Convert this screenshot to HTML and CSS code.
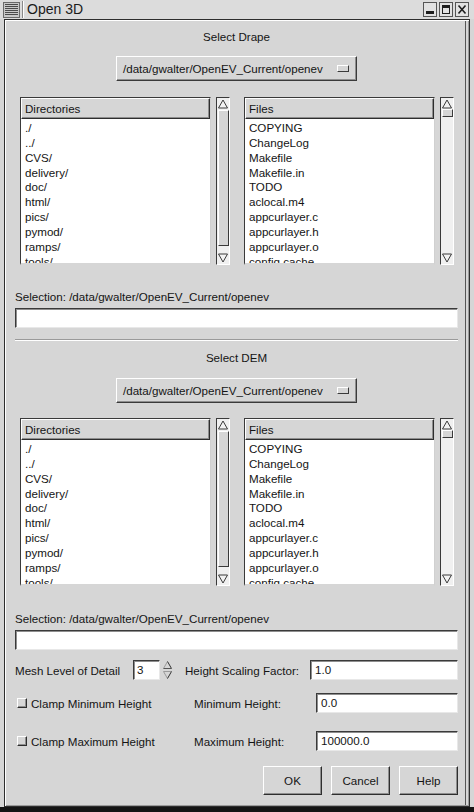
FILE: index.html
```html
<!DOCTYPE html>
<html>
<head>
<meta charset="utf-8">
<title>Open 3D</title>
<link rel="stylesheet" href="styles.css">
</head>
<body>
<div class="titlebar">
  <svg class="menu-icon" width="17" height="16" viewBox="0 0 17 16">
    <rect x="0.5" y="0.5" width="16" height="15" fill="#c8c8c8" stroke="#6a6a6a"/>
    <g stroke="#4a4a4a" stroke-width="1">
      <line x1="2" y1="2.5" x2="15" y2="2.5"/>
      <line x1="2" y1="4.5" x2="15" y2="4.5"/>
      <line x1="2" y1="6.5" x2="15" y2="6.5"/>
      <line x1="2" y1="8.5" x2="15" y2="8.5"/>
      <line x1="2" y1="10.5" x2="15" y2="10.5"/>
      <line x1="2" y1="12.5" x2="15" y2="12.5"/>
    </g>
  </svg>
  <div class="title-sep"></div>
  <span class="title">Open 3D</span>
  <div class="title-buttons">
    <svg width="14" height="15" viewBox="0 0 14 15">
      <rect x="0.5" y="0.5" width="13" height="14" fill="#e2e2e2" stroke="#555"/>
      <rect x="3" y="9" width="8" height="3" fill="#1e1e1e"/>
    </svg>
    <svg width="14" height="15" viewBox="0 0 14 15">
      <rect x="0.5" y="0.5" width="13" height="14" fill="#e2e2e2" stroke="#555"/>
      <rect x="3.5" y="3.5" width="7" height="8" fill="none" stroke="#1e1e1e"/>
      <rect x="3" y="3" width="8" height="3" fill="#1e1e1e"/>
    </svg>
    <svg width="14" height="15" viewBox="0 0 14 15">
      <rect x="0.5" y="0.5" width="13" height="14" fill="#e2e2e2" stroke="#555"/>
      <path d="M3.5 3.5 L10.5 11.5 M10.5 3.5 L3.5 11.5" stroke="#1e1e1e" stroke-width="1.6"/>
    </svg>
  </div>
</div>

<div class="window">
  <div class="content">
    <div class="heading">Select Drape</div>
    <div class="combo-wrap">
      <div class="combo"><span>/data/gwalter/OpenEV_Current/openev</span><span class="combo-ind"></span></div>
    </div>
    <div class="lists">
      <div class="col">
        <div class="list">
          <div class="list-header">Directories</div>
          <div class="items">
            <div>./</div><div>../</div><div>CVS/</div><div>delivery/</div><div>doc/</div>
            <div>html/</div><div>pics/</div><div>pymod/</div><div>ramps/</div><div>tools/</div>
          </div>
        </div>
        <div class="scroll">
          <svg class="arrow" width="12" height="10" viewBox="0 0 12 10"><polygon points="6,1 10.5,9 1.5,9" fill="#f2f2f2" stroke="#3a3a3a"/></svg>
          <div class="thumb thumb-long"></div>
          <svg class="arrow arrow-down" width="12" height="10" viewBox="0 0 12 10"><polygon points="1.5,1 10.5,1 6,9" fill="#f2f2f2" stroke="#3a3a3a"/></svg>
        </div>
      </div>
      <div class="col">
        <div class="list">
          <div class="list-header">Files</div>
          <div class="items">
            <div>COPYING</div><div>ChangeLog</div><div>Makefile</div><div>Makefile.in</div><div>TODO</div>
            <div>aclocal.m4</div><div>appcurlayer.c</div><div>appcurlayer.h</div><div>appcurlayer.o</div><div>config.cache</div>
          </div>
        </div>
        <div class="scroll">
          <svg class="arrow" width="12" height="10" viewBox="0 0 12 10"><polygon points="6,1 10.5,9 1.5,9" fill="#f2f2f2" stroke="#3a3a3a"/></svg>
          <div class="thumb thumb-short"></div>
          <svg class="arrow arrow-down" width="12" height="10" viewBox="0 0 12 10"><polygon points="1.5,1 10.5,1 6,9" fill="#f2f2f2" stroke="#3a3a3a"/></svg>
        </div>
      </div>
    </div>
    <div class="sel-label">Selection: /data/gwalter/OpenEV_Current/openev</div>
    <div class="entry"></div>

    <div class="separator"></div>

    <div class="heading heading-dem">Select DEM</div>
    <div class="combo-wrap combo-wrap-dem">
      <div class="combo"><span>/data/gwalter/OpenEV_Current/openev</span><span class="combo-ind"></span></div>
    </div>
    <div class="lists lists-dem">
      <div class="col">
        <div class="list">
          <div class="list-header">Directories</div>
          <div class="items">
            <div>./</div><div>../</div><div>CVS/</div><div>delivery/</div><div>doc/</div>
            <div>html/</div><div>pics/</div><div>pymod/</div><div>ramps/</div><div>tools/</div>
          </div>
        </div>
        <div class="scroll">
          <svg class="arrow" width="12" height="10" viewBox="0 0 12 10"><polygon points="6,1 10.5,9 1.5,9" fill="#f2f2f2" stroke="#3a3a3a"/></svg>
          <div class="thumb thumb-long"></div>
          <svg class="arrow arrow-down" width="12" height="10" viewBox="0 0 12 10"><polygon points="1.5,1 10.5,1 6,9" fill="#f2f2f2" stroke="#3a3a3a"/></svg>
        </div>
      </div>
      <div class="col">
        <div class="list">
          <div class="list-header">Files</div>
          <div class="items">
            <div>COPYING</div><div>ChangeLog</div><div>Makefile</div><div>Makefile.in</div><div>TODO</div>
            <div>aclocal.m4</div><div>appcurlayer.c</div><div>appcurlayer.h</div><div>appcurlayer.o</div><div>config.cache</div>
          </div>
        </div>
        <div class="scroll">
          <svg class="arrow" width="12" height="10" viewBox="0 0 12 10"><polygon points="6,1 10.5,9 1.5,9" fill="#f2f2f2" stroke="#3a3a3a"/></svg>
          <div class="thumb thumb-short"></div>
          <svg class="arrow arrow-down" width="12" height="10" viewBox="0 0 12 10"><polygon points="1.5,1 10.5,1 6,9" fill="#f2f2f2" stroke="#3a3a3a"/></svg>
        </div>
      </div>
    </div>
    <div class="sel-label sel-label-dem">Selection: /data/gwalter/OpenEV_Current/openev</div>
    <div class="entry"></div>

    <div class="row row-mesh">
      <span class="mesh-label">Mesh Level of Detail</span>
      <div class="entry spin-entry">3</div>
      <svg class="spin-arrows" width="11" height="20" viewBox="0 0 11 20">
        <polyline points="1.5,8.5 5.5,1.5" fill="none" stroke="#9a9a9a"/>
        <line x1="5.5" y1="1.5" x2="9.5" y2="8.5" stroke="#333"/>
        <line x1="1.5" y1="8.5" x2="9.5" y2="8.5" stroke="#555"/>
        <line x1="1.5" y1="11.5" x2="9.5" y2="11.5" stroke="#9a9a9a"/>
        <line x1="1.5" y1="11.5" x2="5.5" y2="18.5" stroke="#9a9a9a"/>
        <line x1="9.5" y1="11.5" x2="5.5" y2="18.5" stroke="#333"/>
      </svg>
      <span class="scale-label">Height Scaling Factor:</span>
      <div class="entry row-entry">1.0</div>
    </div>

    <div class="row row-min">
      <div class="check-label"><span class="checkbox"></span><span>Clamp Minimum Height</span></div>
      <span class="field-label">Minimum Height:</span>
      <div class="entry row-entry field-entry">0.0</div>
    </div>

    <div class="row row-max">
      <div class="check-label"><span class="checkbox"></span><span>Clamp Maximum Height</span></div>
      <span class="field-label">Maximum Height:</span>
      <div class="entry row-entry field-entry">100000.0</div>
    </div>

    <div class="buttons">
      <div class="btn">OK</div>
      <div class="btn">Cancel</div>
      <div class="btn">Help</div>
    </div>
  </div>
</div>
<div class="bottom-edge"></div>
</body>
</html>
```

FILE: styles.css
```css
* { box-sizing: border-box; }
html, body { margin: 0; padding: 0; }
body {
  width: 474px;
  height: 812px;
  overflow: hidden;
  background: #d6d6d6;
  font-family: "Liberation Sans", Arial, sans-serif;
  font-size: 11.6px;
  color: #141414;
}

/* title bar */
.titlebar {
  height: 19px;
  display: flex;
  align-items: center;
  padding: 0 4px 0 3px;
  background: #dcdcdc;
}
.menu-icon { display: block; }
.title-sep {
  width: 1px;
  height: 17px;
  background: #8a8a8a;
  margin-left: 2px;
  border-right: 1px solid #fff;
  box-sizing: content-box;
}
.title {
  margin-left: 3px;
  font-size: 14px;
  color: #1a1a1a;
  line-height: 19px;
}
.title-buttons {
  margin-left: auto;
  display: flex;
  gap: 2px;
  margin-right: 1px;
}
.title-buttons svg { display: block; }

/* window frame */
.window {
  margin: 0 4px;
  height: 788px;
  border: 1px solid #2e2e2e;
  box-shadow: inset 1px 1px 0 #ffffff, inset -1px -1px 0 #9a9a9a, inset -3px 0 0 #d6d6d6, inset -4px 0 0 #555;
}
.bottom-edge {
  height: 5px;
  background: #141414;
}
.content {
  padding: 9px 11px 0 10px;
}

.heading {
  text-align: center;
  line-height: 16px;
}
.heading-dem { margin-top: 9px; }

.combo-wrap {
  display: flex;
  justify-content: center;
  margin-top: 11px;
}
.combo-wrap-dem { margin-top: 12px; }
.combo {
  width: 241px;
  height: 25px;
  display: flex;
  align-items: center;
  justify-content: space-between;
  padding: 0 7px 0 6px;
  border: 1px solid;
  border-color: #ffffff #3a3a3a #3a3a3a #ffffff;
  box-shadow: inset -1px -1px 0 #8e8e8e;
  background: #d6d6d6;
}
.combo-ind {
  width: 12px;
  height: 7px;
  border: 1px solid;
  border-color: #ffffff #3a3a3a #3a3a3a #ffffff;
  background: #d6d6d6;
}

/* lists */
.lists {
  display: grid;
  grid-template-columns: 1fr 1fr;
  grid-template-rows: minmax(0, 1fr);
  column-gap: 14px;
  margin: 16px 4px 0 5px;
  height: 168px;
}
.lists-dem { margin-top: 15px; }
.col {
  display: flex;
  gap: 5px;
  min-width: 0;
  min-height: 0;
}
.list {
  flex: 1;
  min-width: 0;
  background: #ffffff;
  border: 1px solid;
  border-color: #3a3a3a #d0d0d0 #d6d6d6 #3a3a3a;
  border-bottom-width: 2px;
  overflow: hidden;
}
.list-header {
  height: 21px;
  line-height: 19px;
  padding-left: 3px;
  background: #d6d6d6;
  border: 1px solid;
  border-color: #ffffff #2e2e2e #2e2e2e #ffffff;
  box-shadow: inset -1px -1px 0 #8e8e8e;
}
.items {
  padding: 2px 0 0 4px;
  line-height: 14.85px;
  white-space: nowrap;
}

.scroll {
  width: 14px;
  display: flex;
  flex-direction: column;
  align-items: center;
  border: 1px solid;
  border-color: #3a3a3a #ffffff #ffffff #3a3a3a;
  background: #f0f0f0;
  padding: 1px 0;
}
.arrow { display: block; flex: none; }
.arrow-down { margin-top: auto; }
.thumb {
  width: 11px;
  background: #d6d6d6;
  border: 1px solid;
  border-color: #ffffff #3a3a3a #3a3a3a #ffffff;
  flex: none;
}
.thumb-long { height: 136px; margin-top: 1px; }
.thumb-short { height: 8px; }

/* selection + entry */
.sel-label {
  margin-top: 24px;
  line-height: 16px;
}
.sel-label-dem { margin-top: 25px; }
.entry {
  margin-top: 3px;
  height: 20px;
  background: #ffffff;
  border: 1px solid;
  border-color: #3a3a3a #e8e8e8 #e8e8e8 #3a3a3a;
  box-shadow: inset 1px 1px 0 #8e8e8e;
  line-height: 18px;
  padding-left: 4px;
}

.separator {
  margin-top: 11px;
  height: 2px;
  border-top: 1px solid #9a9a9a;
  border-bottom: 1px solid #ffffff;
}

/* form rows */
.row {
  display: flex;
  align-items: center;
  height: 20px;
  white-space: nowrap;
}
.row .entry { margin-top: 0; }
.row-mesh { margin-top: 10px; }
.row-min { margin-top: 13px; }
.row-max { margin-top: 18px; }

.mesh-label { width: 118px; flex: none; }
.spin-entry { width: 27px; flex: none; padding-left: 3px; }
.spin-arrows { display: block; margin-left: 2px; flex: none; }
.scale-label { margin-left: 12px; width: 125px; flex: none; }
.row-entry { flex: 1; }

.check-label {
  width: 179px;
  flex: none;
  display: flex;
  align-items: center;
  gap: 4px;
  padding-left: 2px;
}
.checkbox {
  width: 10px;
  height: 10px;
  flex: none;
  background: #d6d6d6;
  border: 1px solid;
  border-color: #ffffff #2e2e2e #2e2e2e #ffffff;
  box-shadow: inset -1px -1px 0 #8e8e8e;
}
.field-label {
  width: 85px;
  flex: none;
  text-align: right;
}
.field-entry { margin-left: 37px; }

/* buttons */
.buttons {
  display: flex;
  justify-content: flex-end;
  gap: 9px;
  margin-top: 15px;
}
.btn {
  width: 59px;
  height: 29px;
  display: flex;
  align-items: center;
  justify-content: center;
  background: #d6d6d6;
  border: 1px solid;
  border-color: #ffffff #2e2e2e #2e2e2e #ffffff;
  box-shadow: inset -1px -1px 0 #8e8e8e;
}
```
